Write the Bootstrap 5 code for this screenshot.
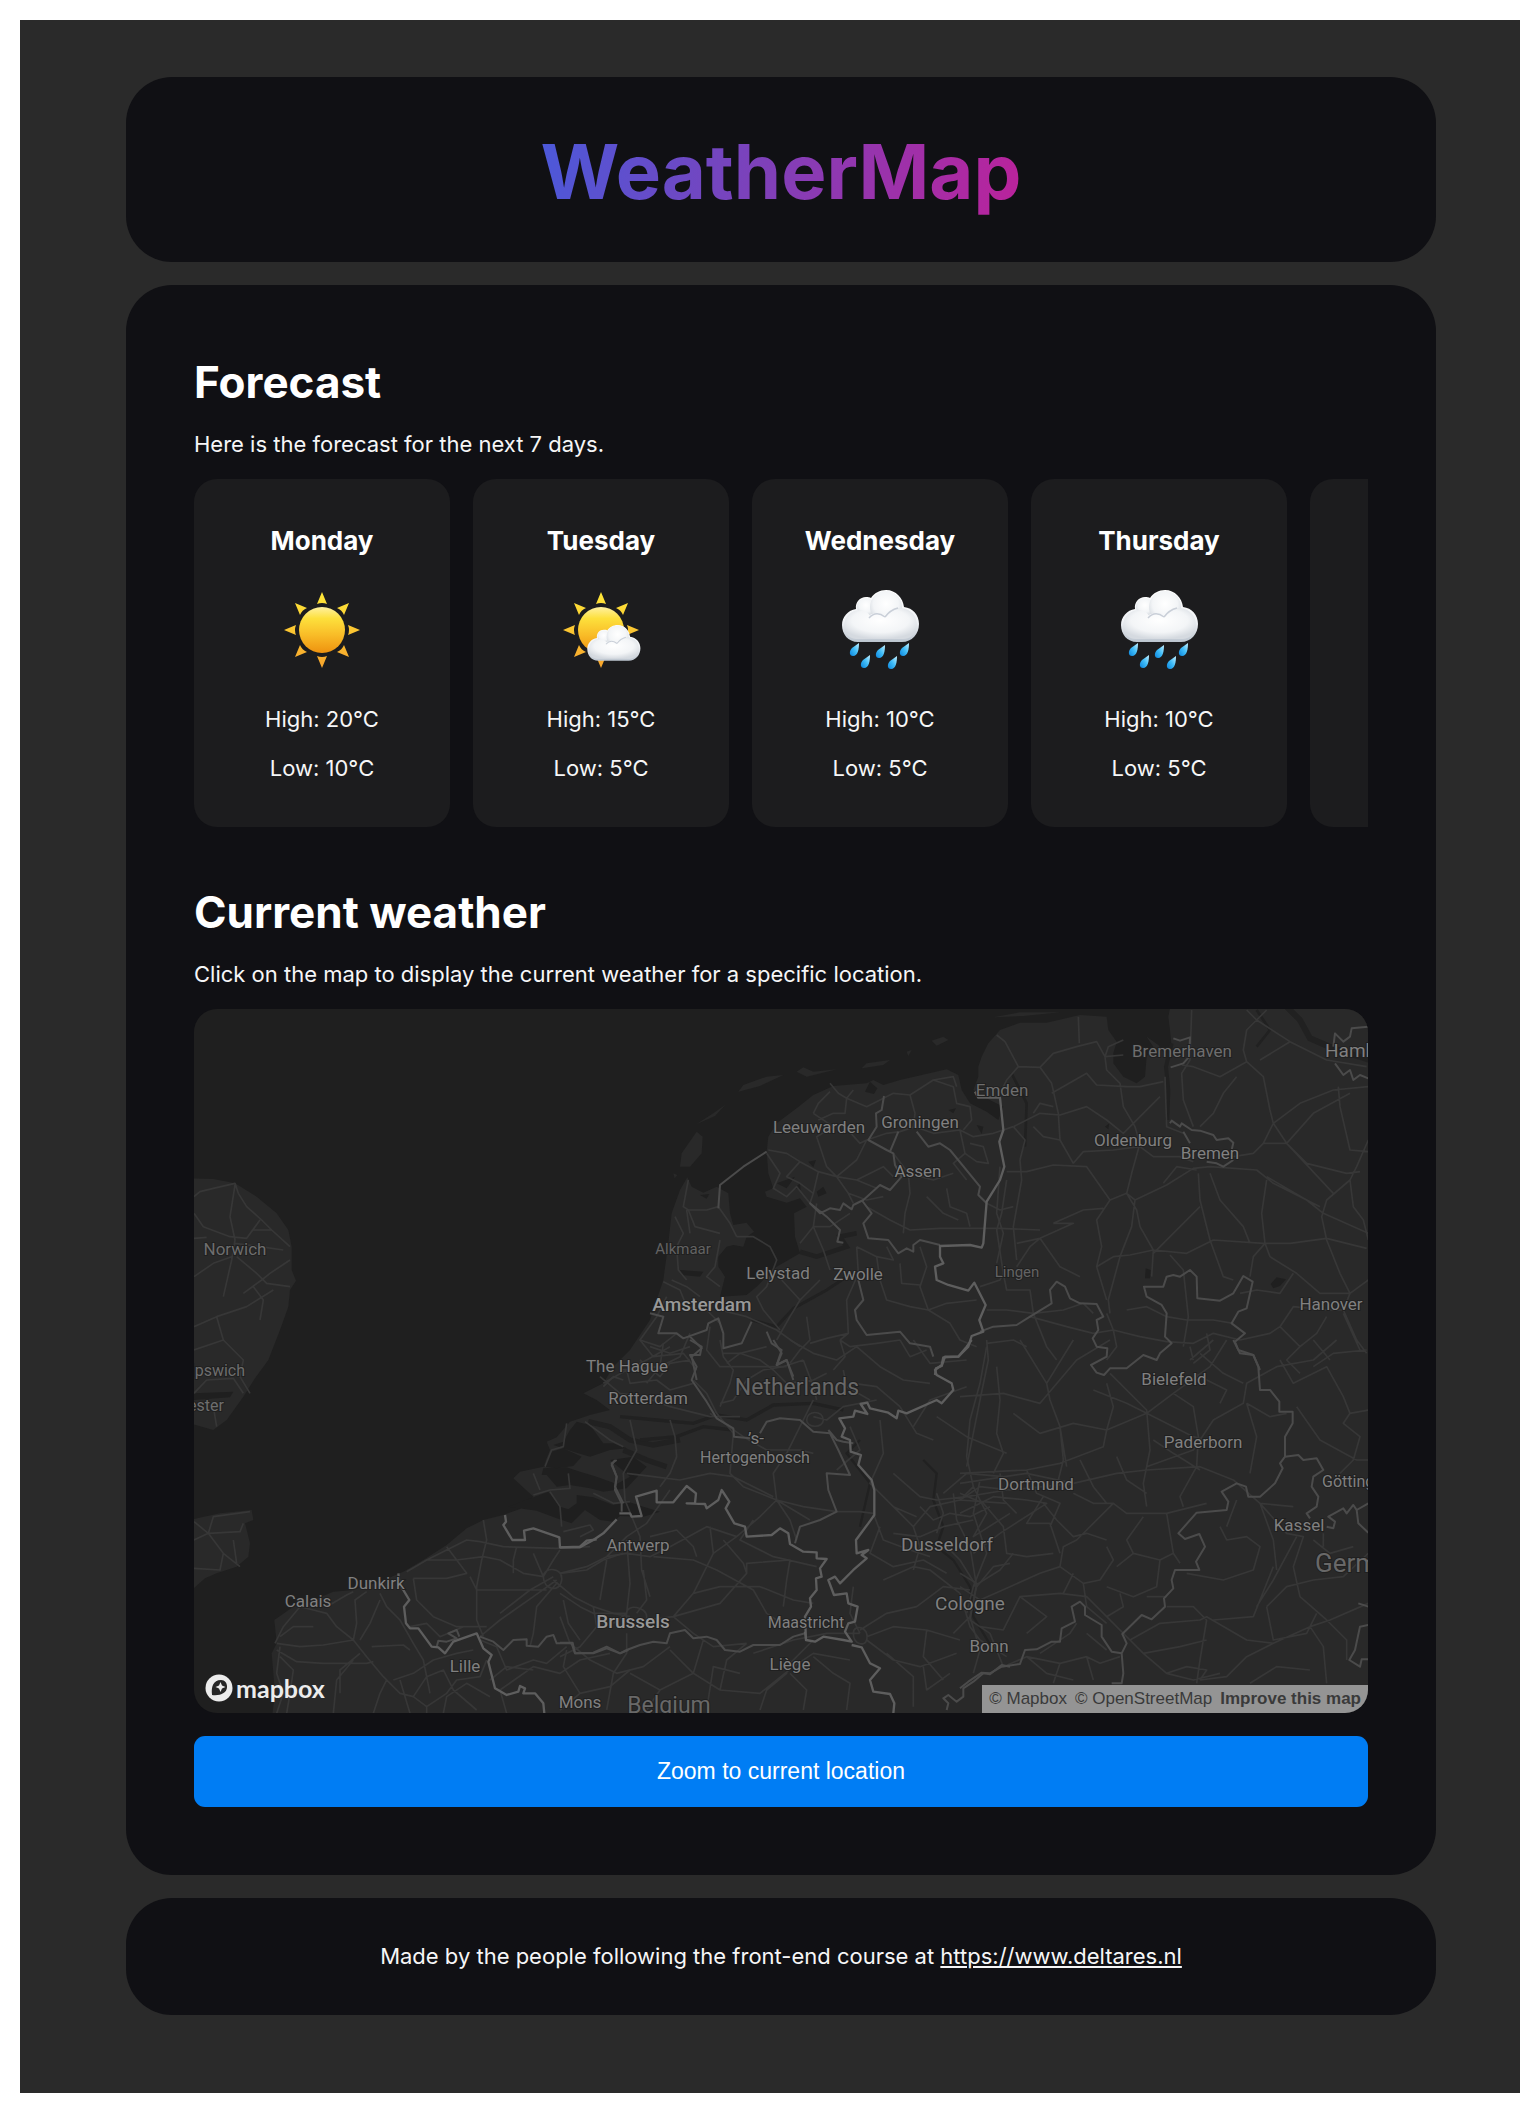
<!DOCTYPE html>
<html lang="en">
<head>
<meta charset="utf-8">
<meta name="viewport" content="width=device-width, initial-scale=1">
<title>WeatherMap</title>
<link href="https://cdn.jsdelivr.net/npm/bootstrap@5.3.0/dist/css/bootstrap.min.css" rel="stylesheet">
<style>
body{background:#fff;padding:20px 20px 19px;font-family:Inter,"Open Sans",sans-serif;font-size:22px;line-height:27px;color:#f6f6f7}
.page-shell{background:#2a2a2a;padding:57px 84px 78px 106px;gap:23px}
.panel{background:#101014;border-radius:46px}
.panel-head{padding:47px 68px 43px}
.panel-main{padding:68px}
.panel-foot{padding:45px 68px}
.site-title{font-size:76px;line-height:95px;font-weight:700;margin:0;background:linear-gradient(100deg,#4b59da,#7d41ba 45%,#bb229b);-webkit-background-clip:text;background-clip:text;color:transparent}
h2{font-size:44px;line-height:58px;font-weight:700;margin:0 0 20px;color:#fff}
.intro{margin:0 0 21px}
.days{gap:23px;overflow-x:auto;scrollbar-width:none;margin-bottom:56px}
.days::-webkit-scrollbar{display:none}
.day{flex:0 0 256px;background:#1c1c1e;border-radius:23px;padding:46px 16px 45px}
.day h3{font-size:26px;line-height:32px;font-weight:700;margin:0 0 33px;color:#fff}
.day svg{width:80px;height:80px;margin-bottom:36px}
.day p{margin:0 0 22px}
.day p:last-child{margin:0}
.map-view{height:704px;border-radius:23px;background:#1f1f1f;margin-bottom:23px}
.map-view>svg{width:100%;height:100%;display:block}
.land{fill:#292929}
.sea{fill:#1f1f1f}
.river{fill:none;stroke:#212121}
.roads{fill:none;stroke:#373737;stroke-width:5;stroke-linejoin:round}
.province{fill:none;stroke:#4b4b4b;stroke-width:6;stroke-linejoin:round}
.nation{fill:none;stroke:#5e5e5e;stroke-width:7;stroke-linejoin:round}
.places{font-family:Roboto,"Noto Sans",sans-serif;font-size:17px;fill:#808080;stroke:#202020;stroke-width:2px;paint-order:stroke;text-anchor:middle}
.places .minor{font-size:15px;fill:#636363}
.places .dim{fill:#6e6e6e}
.places .edge{font-size:16px}
.places .big{font-size:19px}
.places .capital{font-size:19px;font-weight:500;fill:#989898}
.places .country{font-size:23px;fill:#686868}
.places .nation-name{font-size:26px}
.places .from{text-anchor:start}
.places .to{text-anchor:end}
.map-brand{left:11px;bottom:11px;gap:3px;color:#ececec;font:700 25px/28px Lato,sans-serif}
.map-brand:hover{color:#fff}
.map-credit{right:0;bottom:0;height:28px;padding:0 7px;gap:8px;background:#949494;font:17px/28px "Liberation Sans",Arial,sans-serif}
.map-credit a{color:#3a3a3a;text-decoration:none}
.btn-zoom{background:#007df4;color:#fff;font:23px/27px "Liberation Sans",Arial,sans-serif;padding:22px;border:0;border-radius:11px}
.btn-zoom:hover{background:#0a6fd6;color:#fff}
.panel-foot a{color:inherit}
</style>
</head>
<body>
<svg width="0" height="0" class="position-absolute" aria-hidden="true">
<defs>
<linearGradient id="disc" x1="0" y1="0" x2="0" y2="1"><stop offset="0" stop-color="#fff1a0"/><stop offset=".25" stop-color="#fde03c"/><stop offset=".6" stop-color="#f9bd28"/><stop offset="1" stop-color="#ee920f"/></linearGradient>
<linearGradient id="ray" gradientUnits="userSpaceOnUse" x1="0" y1="-38" x2="0" y2="38"><stop offset="0" stop-color="#ffe838"/><stop offset="1" stop-color="#f7a42c"/></linearGradient>
<linearGradient id="puff" x1="0" y1="0" x2="0" y2="1"><stop offset="0" stop-color="#fff"/><stop offset=".6" stop-color="#f1f3f6"/><stop offset="1" stop-color="#bcc5cf"/></linearGradient>
<radialGradient id="ball" cx=".5" cy=".4" r=".6"><stop offset="0" stop-color="#fff"/><stop offset=".65" stop-color="#f3f5f7"/><stop offset="1" stop-color="#d5dae0"/></radialGradient>
<linearGradient id="drip" x1="1" y1="0" x2="0" y2="1"><stop offset="0" stop-color="#c8f1ff"/><stop offset=".5" stop-color="#3fbcf8"/><stop offset="1" stop-color="#0a84dc"/></linearGradient>
<g id="sunshape">
<g fill="url(#ray)"><path d="M0-38L5-26Q0-28-5-26Z"/><path d="M0 38L5 26Q0 28-5 26Z"/><path d="M-38 0L-26-5Q-28 0-26 5Z"/><path d="M38 0L26-5Q28 0 26 5Z"/><path d="M-27-27L-15-22Q-20-20-22-15Z"/><path d="M27-27L15-22Q20-20 22-15Z"/><path d="M-27 27L-15 22Q-20 20-22 15Z"/><path d="M27 27L15 22Q20 20 22 15Z"/></g>
<circle r="23" fill="url(#disc)"/>
</g>
<g id="cloudshape">
<path d="M-22 12C-32 12-38 4-38-5C-38-13-32-20-24-21C-25-28-20-33-14-33C-12-33-10-33-9-32C-6-37 0-40 6-40C16-40 23-32 24-23C33-22 39-15 39-6C39 4 32 12 22 12Z" fill="url(#puff)"/>
<circle cx="-14" cy="-23" r="9" fill="url(#ball)"/><circle cx="6" cy="-23" r="16" fill="url(#ball)"/>
<path d="M-36-4C-36-14-28-20-20-20C-16-20-12-18-10-14C-6-18 0-18 4-14C8-20 14-22 21-22C31-21 37-14 37-5C37 2 32 8 24 9L-24 9C-32 8-36 2-36-4Z" fill="url(#ball)"/>
<path d="M-11-12Q-4-20 5-13M5-13Q10-20 18-22" fill="none" stroke="#c9cfd8" stroke-width="1.5"/>
</g>
<path id="dropshape" d="M5-7C5-1 4 6-1 6C-5 6-5 1-2-2Z" fill="url(#drip)"/>
<g id="rainshape"><use href="#cloudshape"/><use href="#dropshape" x="-26" y="20"/><use href="#dropshape" x="0" y="22"/><use href="#dropshape" x="24" y="20"/><use href="#dropshape" x="-15" y="32"/><use href="#dropshape" x="12" y="33"/></g>
</defs>
</svg>

<div class="page-shell d-flex flex-column">
<header class="panel panel-head d-flex justify-content-center">
<h1 class="site-title">WeatherMap</h1>
</header>

<main class="panel panel-main">
<section>
<h2>Forecast</h2>
<p class="intro">Here is the forecast for the next 7 days.</p>
<div class="days d-flex text-center">
<article class="day"><h3>Monday</h3><svg viewBox="-40 -40 80 80" role="img" aria-label="Sunny"><use href="#sunshape"/></svg><p>High: 20°C</p><p>Low: 10°C</p></article>
<article class="day"><h3>Tuesday</h3><svg viewBox="-40 -40 80 80" role="img" aria-label="Partly cloudy"><use href="#sunshape"/><use href="#cloudshape" transform="translate(12.500 22.500) scale(.69)"/></svg><p>High: 15°C</p><p>Low: 5°C</p></article>
<article class="day"><h3>Wednesday</h3><svg viewBox="-40 -40 80 80" role="img" aria-label="Rain"><use href="#rainshape"/></svg><p>High: 10°C</p><p>Low: 5°C</p></article>
<article class="day"><h3>Thursday</h3><svg viewBox="-40 -40 80 80" role="img" aria-label="Rain"><use href="#rainshape"/></svg><p>High: 10°C</p><p>Low: 5°C</p></article>
<article class="day"></article>
</div>
</section>

<section>
<h2>Current weather</h2>
<p class="intro">Click on the map to display the current weather for a specific location.</p>
<div class="map-view position-relative overflow-hidden">
<svg viewBox="0 0 1174 704" preserveAspectRatio="xMidYMid slice" role="img" aria-label="Map of the Netherlands and its neighbours">
<g transform="scale(.33333)">
<!-- coastline of the continent and the Wadden islands -->
<g transform="translate(1218 -87)">
<path class="land" d="M-985 2220L-975 2140L-985 2020L-970 1990L-977 1920L-920 1880L-860 1860L-800 1835L-740 1830L-660 1805L-590 1775L-530 1740L-460 1695L-400 1645L-350 1620L-290 1605L-240 1587L-200 1550L-260 1495L-240 1475L-170 1460L-150 1410L-160 1385L-130 1372L-90 1325L-30 1305L30 1290L-10 1260L-50 1240L10 1210L40 1160L90 1110L150 1020L190 900L205 790L215 700L240 630L262 592L275 620L310 638L350 620L385 640L390 700L400 735L440 728L462 755L440 770L430 800L400 795L380 800L355 830L355 860L375 890L360 950L440 945L470 920L530 860L600 820L585 770L582 700L620 680L600 655L560 668L500 650L495 635L520 625L505 580L500 515L505 470L530 430L590 385L640 345L700 318L800 310L820 300L850 315L900 300L1040 268L1075 285L1085 330L1110 370L1160 395L1195 420L1210 380L1150 350L1120 330L1135 290L1135 260L1145 230L1165 190L1200 150L1260 128L1340 128L1440 105L1520 110L1525 150L1550 185L1540 220L1540 250L1570 290L1610 310L1635 290L1640 230L1660 200L1640 170L1675 195L1700 230L1715 200L1710 150L1705 110L1715 60H2400V2220Z"/>
<path class="land" d="M240 560L245 520L290 455L308 470L305 520L270 560ZM290 432L340 400L375 375L345 408ZM415 335L430 315L500 290L550 285L480 318ZM590 275L610 262L640 275L710 268L620 290ZM785 265L800 250L870 240L850 255ZM995 182L1030 170L1045 180L1010 197ZM920 215L935 210L925 228ZM220 580L232 585L224 595ZM1180 112L1260 97L1380 97L1270 108Z"/>
<path class="sea" d="M795 335L810 305L832 325L822 342ZM625 545L648 540L640 562ZM530 610L585 590L560 625ZM650 635L670 620L680 640L655 650ZM585 625L600 608L602 630ZM240 870L310 875L300 890L245 885ZM300 645L328 642L320 656ZM1130 435L1150 440L1145 462ZM1045 390L1068 385L1060 400Z"/>
<path class="river" stroke-width="14" d="M600 815L650 830L740 800L720 770L770 760"/>
<path class="river" stroke-width="9" d="M455 1020L530 1040L580 985L680 930L740 890"/>
</g>
<!-- England -->
<path class="land" transform="translate(-42 -447)" d="M30 955L100 957L165 970L230 1010L290 1060L325 1110L335 1160L335 1230L348 1262L330 1290L325 1340L300 1410L265 1500L225 1555L190 1610L140 1680L100 1710L30 1690ZM30 1980L120 1960L215 1950L220 1980L195 1990L210 2050L205 2090L170 2120L110 2140L75 2155L30 2195Z"/>
<!-- German lakes and rivers -->
<g transform="translate(2358 -87)">
<path class="sea" d="M497 865L512 870L510 895L495 895ZM872 912L890 892L918 898L900 918L880 925ZM375 440L388 430L385 448Z"/>
<path class="river" stroke-width="18" d="M920 80L960 120L990 175L1060 205L1170 240"/>
<path class="river" stroke-width="12" d="M575 190L558 260L565 330L562 420"/>
<path class="river" stroke-width="8" d="M95 280L140 370L135 500M830 90L870 150L830 200"/>
</g>
<!-- Zeeland delta -->
<g transform="translate(-42 1053)">
<path class="sea" d="M985 440L1060 412L1105 395L1140 440L1165 448L1190 430L1190 405L1240 412L1300 435L1345 425L1390 440L1440 455L1390 470L1320 468L1300 485L1260 480L1215 450L1175 490L1130 475L1070 452Z"/>
<path class="sea" d="M1090 325L1160 322L1200 335L1250 350L1310 372L1350 350L1320 325L1290 300L1360 290L1400 320L1340 385L1270 395L1230 385L1170 375L1130 380L1100 345L1085 345Z"/>
<path class="sea" d="M1120 255L1180 275L1230 290L1290 270L1340 265L1300 250L1270 250L1230 195L1190 185L1170 210L1150 245ZM1090 320L1115 275L1150 265L1205 290L1180 318L1130 325Z"/>
<path class="river" stroke-width="16" d="M1225 185L1290 200L1350 240L1420 255L1500 240M1330 270L1400 300L1460 320"/>
<path class="sea" d="M42 100L160 95L150 112L42 120Z"/>
</g>
<g transform="translate(1098 993)">
<path class="river" stroke-width="10" d="M180 230L290 240L400 250L470 225L560 240L640 195L760 190L850 210M240 300L350 290L430 260L520 270"/>
<path class="river" stroke-width="7" d="M900 300L860 340L930 430L900 560M1090 360L1130 400L1120 480L1150 560L1130 620L1180 660L1230 740L1240 830L1300 930"/>
</g>

<!-- roads -->
<g class="roads">
<g transform="translate(1218 -87)">
<path d="M690 310L715 340L740 355L760 330M640 400L655 370L690 335M640 400L700 440L650 470L680 560L710 590L745 640L760 670M740 355L735 400L700 400L655 420M740 355L800 380L880 340L930 345L1000 300L1060 290L1070 320M930 345L945 400L940 440M505 510L560 520L600 545L655 575L710 590L770 600L830 625M500 520L540 580L520 625L560 650L590 620L630 670M655 575L640 640L630 670M600 545L560 590L600 610L640 640M710 590L770 540L800 480L780 490L735 440M800 480L860 460L900 455L945 440M945 440L1000 460L1080 450L1120 470L1180 460L1240 440M1080 450L1095 520L1060 550L1100 600M1000 300L1060 320L1070 370L1110 380L1115 420L1090 450M1110 490L1150 500L1165 550L1130 545L1095 520M880 520L925 580L930 640L915 700L910 760M925 580L1000 600L1060 580M770 600L850 560L880 590M745 640L800 660L850 650M800 680L870 720L930 750L1020 745L1100 745L1200 745L1320 750M1040 625L1050 680L1100 700L1110 740M980 650L1030 700L1075 720M1200 560L1190 700L1210 760L1190 850M1160 670L1200 690L1240 680M650 670L640 740L600 790M640 740L690 740L750 700M640 740L670 810L690 870M770 800L830 830L880 840L860 800M830 830L840 900L860 960L930 980L985 990L1040 970L1130 960M985 990L960 920L980 860L960 800M985 990L1050 1030L1080 1080L1130 1100M900 850L905 910L960 915M770 800L775 880L740 960L745 1060L720 1080M545 900L600 960L570 1010L530 1080M600 960L660 900M620 1010L630 1080L600 1110L570 1150M745 1060L680 1075L630 1090M720 1080L750 1100L830 1090L900 1080M720 1080L735 1130L700 1170M900 1080L930 1130L980 1110M355 680L320 690L265 690L250 680L265 600M355 680L390 730L410 770M265 690L285 740L360 760M225 710L250 760L230 800L235 870L260 900M360 780L345 860L320 890L360 920M260 690L270 760M410 770L460 770L510 800L530 840L500 920L470 950L490 990L540 1050M190 905L240 930L260 980L320 990L360 1030M215 900L260 920L300 950M200 950L170 1010L120 1080L180 1100L230 1060M150 1100L210 1120L270 1100M360 990L440 1010L530 1050L600 1100M380 1150L420 1120L500 1100M330 1040L320 1110L360 1160L440 1160L560 1160M270 1060L240 1130L180 1160L60 1170"/>
</g>
<g transform="translate(2358 -87)">
<path d="M50 165L75 185L115 260L180 262L215 310L235 400L240 480L280 550M115 260L80 300L60 340M180 262L220 220L290 200L350 185L375 230L430 225M295 110L298 190M375 230L385 200L430 180M375 230L380 270L420 310L430 380L465 440L480 490L455 580L440 640L465 660M215 340L320 280L350 315L440 320L480 320L550 305M160 400L180 370L220 380M100 440L180 400L240 405L320 380L380 420L430 460L540 350M160 440L190 470L240 480M120 540L135 480L100 440M120 540L125 600L100 740L110 840M280 550L310 515L400 510L480 500L520 530L600 530L640 545M80 575L140 575L220 555L320 560L390 660L440 640L470 690L480 740L520 810L515 890M465 660L560 615L640 565L690 560L830 570L880 610L980 660L1030 700L1165 760M465 660L455 740L420 830L385 960L390 1000M390 660L350 720L365 800L350 860L380 960M220 730L310 690L370 685M110 790L180 775L280 730L220 730M180 775L240 860L300 890M110 860L150 800L180 775M520 810L620 820L700 780L850 790L930 790L1040 775L1160 805M520 820L600 740L660 680M350 860L400 830L450 825L520 810M570 825L610 870L625 1010L610 1100M635 90L630 240L605 280L610 360L640 440M555 290L560 440L610 460M605 255L640 260L720 290L800 245L850 290L870 390L880 430M800 245L790 210L800 150L830 120L860 90M830 120L930 185L1040 240L1160 260M840 240L930 185M800 90L830 120M880 430L920 490L980 550L1100 580L1140 575M660 440L700 400L730 340L770 290M880 430L960 370L1060 330L1165 320M820 520L850 490L880 430M850 490L920 490L1000 400L1110 340M760 530L820 520M1075 320L1080 380L1110 510L1165 515M1165 480L1130 560L1110 600L1040 660L1025 710L1040 780L1080 880L1110 940M690 580L720 660L790 740L810 790M655 580L660 660L690 780L730 890L760 900M855 790L845 700L860 600M855 790L870 830L950 880L1020 940L1110 940L1165 900M855 790L820 830L810 890M940 880L900 940L830 930L780 940M1110 600L1120 680L1150 720L1165 780M550 610L590 560L650 570M860 590L980 660L1020 680M920 490L1060 640M160 1000L150 930L80 930L70 880L50 750L65 700L80 600M0 920L60 900L70 880M20 990L80 990L160 1000L250 990L310 970L340 1000M160 1000L200 1100L230 1140M20 1090L100 1080L140 1100M150 1010L260 1040L340 1060L400 1050L480 1070L560 1085L640 1090L700 1060L780 1080M400 1050L410 1100L380 1140M400 1050L380 1000M440 990L500 980L560 1010L620 1020L700 1020L760 1030M640 1150L690 1110L680 1060M780 1080L870 1060L900 1040L940 980L1040 990L1090 990L1110 940M900 1040L960 1100L920 1140L960 1180M960 1100L1010 1060L1040 1010M1090 990L1130 1080L1160 1120M1090 1000L1140 1110M1000 1160L1060 1120L1160 1110"/>
</g>
<g transform="translate(-42 -447)">
<path d="M42 1010L60 995L100 985L165 970L175 1000L200 1040L245 1080L275 1110L330 1160M165 975L150 1070L165 1140L155 1200L130 1310M42 1060L70 1100L150 1130L200 1135L240 1080M42 1135L80 1132M215 1110L275 1110M165 1150L240 1160L310 1170M170 1190L230 1240L260 1270L330 1280M330 1200L270 1240L245 1260L190 1300M42 1250L100 1210L155 1190M220 1280L250 1320L240 1380M42 1400L110 1370L200 1340L280 1290M110 1370L130 1440L190 1500L180 1550L210 1600M42 1600L80 1560L160 1555L190 1600M100 1640L110 1700M42 1470L130 1440M42 1985L85 2020L130 2080L180 2120M85 2020L100 1970L210 1955M85 2020L180 2015L190 1990M160 2040L170 2110M42 2125L120 2130L130 2080M42 2040L85 2020"/>
</g>
<g transform="translate(-42 1053)">
<path d="M285 850L310 800L360 740L400 750L440 760L470 800L520 840L560 890L610 950L660 1000L700 1010L740 1040L740 1060M290 850L360 860L430 855L520 840L530 790L525 720L560 695M290 870L350 905L430 910L560 910L580 905M300 860L290 940L310 1000L290 1060M300 890L340 930L330 1000L320 1060M300 830L340 800L400 800M440 740L500 705L520 695M600 700L620 740L660 780L700 850L730 900L750 1000M600 720L570 790L540 840M480 1000L480 930L540 880M575 860L670 855L690 870M520 900L470 960L460 1060M620 960L600 1000L580 1060M640 960L700 940L760 900L830 880L880 870M700 1010L740 950L790 930L820 990L890 1050M740 1040L800 1000L830 960L900 950L920 900M700 655L710 720L760 770L830 800L920 800M680 635L740 600L860 540L900 545L970 560L1130 565L1230 560M740 600L830 600L910 590L960 600L1030 640L1090 650M910 480L920 540L905 600L890 680L890 780L910 830M870 650L890 690L960 690L1100 690M800 560L860 640L800 655L700 655M1000 640L1000 600L1010 560M1060 580L1090 650L1120 600L1140 570M1130 660L1060 710L960 780L900 830M1120 650L1050 690L960 760M1090 650C1090 620 1150 620 1145 660C1140 700 1090 690 1090 650M1120 660L1180 710L1240 740L1300 760L1350 770M1140 640L1220 630L1270 600L1330 580M1130 670L1070 740L1060 820L1050 860M1150 720L1165 790L1200 840M900 840L950 860L980 930L1060 900L1100 910L1160 860M1160 870L1150 920L1200 1000L1290 980L1350 930M1060 930L980 920L930 960M980 1060L960 990L1060 920L1140 940L1200 900L1290 880M1200 1000L1140 1050M1215 185L1290 240L1330 260M1160 190L1150 260L1115 270L1095 320M1110 395L1140 440L1145 500M1165 340L1170 385L1110 390L1060 405M1240 400L1300 430L1350 425M1150 515L1230 495L1240 510L1200 530M1270 80L1300 50L1330 60M1280 600L1270 660L1260 720M1060 340L1080 390M850 800L780 830L740 790L690 800M660 960L690 1060M790 1060L800 1010L860 970L930 1010"/>
</g>
<g transform="translate(1098 993)">
<path d="M120 110L180 160L250 170L330 200L450 230L540 230M130 130L200 90L260 60L330 20M200 90L210 130L290 120L330 150L400 130M240 60L300 110L330 70L390 60M310 10L300 80L260 130M240 0L280 50L370 40L410 90M330 240L345 290L350 350L330 400L300 440M210 240L230 330L190 400L195 480L240 590L245 690L270 770M400 120L440 160L470 220L520 280L510 400L550 440L650 480L750 540M480 190L520 180L560 120L610 90L670 80L730 60M490 40L540 40L600 60L640 90L680 130L760 120L800 100M480 0L490 50L520 90L510 130L480 200M450 220L550 290L620 330L720 330L760 340M200 400L280 410L360 420L450 400L520 410L640 470M650 480L640 400L680 340L760 180M650 480L730 500L830 515L900 515L940 520M650 480L600 530L530 590L460 640L400 760M650 480L690 540L710 600M690 0L760 40L830 60L890 20L960 80L1030 120L1110 130M730 60L760 140L770 180M880 130L950 140L1020 200M760 230L800 240L850 200L950 180M740 240C740 210 790 210 790 240C790 265 740 265 740 240M850 90L860 140L930 180M830 390L900 330L870 260M960 240L970 340L930 430L1000 500L1070 530M1060 0L1110 70L1220 60M1280 20L1260 130L1230 240L1220 350L1240 440L1200 480M1020 200L1070 280L1120 300M1220 140L1110 180L1060 260M1130 230L1220 290L1340 340M1000 400L1080 470L1130 480L1220 470L1340 450M1060 560L1110 500L1200 480L1340 490M1080 500L1120 540L1170 520L1230 530L1290 500M1130 460L1150 520L1130 580M1180 460L1190 540L1230 620L1250 740L1230 830L1180 880M1150 460L1220 400L1330 410M1240 440L1280 520L1240 590L1350 520M1000 580L1080 590L1150 560L1240 540M960 560L930 640L1000 680L1090 660L1160 700M940 520L970 600L1050 630L1110 650M970 720L1060 680L1110 690L1200 760M900 870L980 820L1070 800L1150 740L1230 750M1000 500L1060 560L1080 620L1060 690M920 890L1000 860L1100 870L1200 900M1200 760L1230 860L1260 900L1340 950M1160 620L1200 660L1250 740L1300 680L1350 670M0 700L80 680L140 650L200 590L260 550L330 450M140 650L200 640L270 650L330 620L440 560L530 590M200 600L210 730L200 820L160 850M250 690L260 780L230 820M200 820C200 790 260 800 260 830C260 880 190 870 200 820M0 760L60 800L100 820L200 820M260 840L340 830L400 760L480 740L600 740L700 780L760 790M340 830L480 790L560 700L550 670L490 600M340 830L400 880L460 920L560 910M280 650L400 660L470 690L580 750L620 820L650 840M560 700L560 670L690 660L680 720L670 800M450 560L460 640M410 650L400 620L350 570L270 590M580 540L540 600L640 650L770 680M0 830L30 910L90 960L170 1000L250 980L330 920M100 800L110 860L60 920L0 950M200 880L200 940L160 1000L140 1110M210 1000L300 1050L400 1000L430 900M330 930L400 1000L480 1050L600 1060L700 980L760 940L870 960M300 1050L260 1110M480 1050L500 960L560 910M540 1000L460 980L440 1110M690 960L680 1000L620 1050L600 1110M690 1000L740 1050L730 1110M760 950L820 1000L870 1030L860 1110M690 970L760 900M580 940L640 920L700 900L800 880L900 880M900 880L870 820L880 740M880 880C880 850 930 860 920 900C915 920 880 915 880 880M920 900L1000 960L1080 980L1190 940M980 940L1060 1010L1060 1100M1090 980L1100 1050L1170 1000M1230 830L1260 930L1240 1000M1100 870L1090 950L1150 1020"/>
</g>
<g transform="translate(2298 993)">
<path d="M80 0L85 60L60 180L40 280L20 380M0 170L130 160L240 190L350 60L450 0M180 0L260 130L270 180L300 260L320 380M340 0L260 130M110 80L120 180L110 280L130 340L100 400M160 220L240 280L340 250L440 270L560 220L640 160L750 80L800 0M440 270L430 320L300 370L200 390L0 400M440 130L460 200L440 270M450 100L560 210L570 330L550 430L560 500M400 150L500 190L560 220L700 290L770 310M640 160L700 200L715 290L710 380L660 470L670 500M0 430L200 400L340 430L470 400L560 390L720 380L820 420L900 490L1000 500M720 390L640 340L580 300M560 380L700 330L760 240L850 190L860 130L950 80L1060 60L1130 0M860 190L890 290L870 400M860 190L930 230L980 220M780 190L800 150L700 100M690 60L760 0M700 60L690 20M720 40L790 100L850 130M960 60L1000 130L1100 80L1150 170L1170 220L1225 210M1060 0L1110 60M1010 200L1080 300L1190 360L1225 360M1170 220L1150 250L1200 290L1180 360L1140 400M0 480L60 440L150 450L250 440L340 430M0 520L100 470L200 480L260 490L120 580L40 640M60 420L40 520L80 640L40 740L20 820M250 470L200 550L270 550L300 640M250 490L290 540L340 590L380 580L440 600M340 460L400 490L460 490L500 520L620 520L740 490M460 490L380 570L350 600L310 620L300 680L370 730L420 720L460 660L440 620M360 360L400 440L440 490M470 350L500 420L560 460M620 520L640 640L660 670M550 530L500 600L520 640L470 680M520 640L600 660L640 640M600 660L590 740L520 770L440 740M120 400L130 480L170 520M200 390L230 460L300 490L270 560M300 260L310 360L290 440M0 460L70 490L130 560L140 640L200 650L280 640M160 640L120 690L40 740M0 740L60 780L150 740L240 700L300 680M0 700L50 730L30 840L90 880L130 980M60 860L130 870L180 770L300 760L380 770L440 830L510 900L550 940L620 1000L700 1020L780 1000M370 730L380 800L440 850M180 770L260 830L200 880M310 760L340 700M440 830L490 800L480 760M510 900L600 850L720 840L740 830L860 900L940 910L1050 860L1110 840L1225 790M740 840L720 960L710 1030M740 840L700 800L620 800M620 770L560 770M680 700L790 720L880 690L900 620L860 590L800 600L780 560M830 480L800 560M900 490L980 580L1030 590L1000 680L1020 770L1100 840M940 680L900 780L880 830L760 840M1010 590L940 720L890 800M900 490L940 600L950 690M920 800L980 740L1060 720L1150 710L1225 640M920 800L940 900L1040 880L1070 820M1050 860L1090 920L1100 1030M940 910L860 950L800 1010L720 1020M1060 600L1110 640L1180 620M1090 580L1090 620M550 940L660 920L740 900M380 880L440 930M130 980L200 950L300 970L380 950L420 970L480 950M200 950L260 1000L340 1020M240 940L330 880L350 850M300 970L280 1030M380 950L400 1020M1100 840L1160 900L1160 960M870 1030L950 980L1050 990M620 1000L680 980L740 990L720 1020"/>
</g>
</g>

<!-- province and state lines -->
<g class="province">
<path transform="translate(1218 -87)" d="M355 685L360 615L430 560L500 515M852 348L845 390L828 400L830 440L805 480L860 510L880 520L885 555L905 590L870 630L840 615L790 660L760 675L755 688L730 670L720 690L690 685L660 700L630 670L680 710L720 750L712 785L730 788M895 455L870 515M950 455L985 500L1020 490L1050 510L1140 620L1135 645L1160 670M785 660L815 700L790 730L805 775L865 780L895 820L920 805L940 815L940 795L960 780L1020 795M775 900L790 960L765 990L770 1020L800 1065L900 1055L930 1090L990 1100L1000 1130M150 1000L190 1010L175 1060L230 1060L250 1075L320 1050L325 1030L355 1015L370 1060L370 1105L425 1090L455 1025M270 1070L305 1105L275 1130L290 1200M500 1055L515 1090L545 1110L530 1155L560 1140L580 1200"/>
<path transform="translate(2358 -87)" d="M580 175L600 182L630 172L628 230L610 250L572 262M570 430L575 422L600 440L605 430L635 450L660 452L700 465L710 480L745 475L760 488L755 510M610 455L630 490M680 545L710 550L730 560L760 540M1165 140L1115 145L1110 170L1090 185L1065 160L1060 200M1065 250L1090 285L1110 270L1120 300L1140 285L1165 295M0 1055L40 1040L110 1035L150 1010L215 970L210 930L230 905L255 920L270 955L300 970L350 972L370 1010L350 1020L355 1050L338 1075L350 1100L382 1105L380 1130L333 1155L350 1178L372 1185L390 1165L440 1165L490 1125L530 1140L540 1120L575 1090L555 1070L560 1000L545 975L500 950L492 920L550 920L560 890L580 885L600 890L630 870L650 890L652 955L720 962L760 940L790 888L818 905L800 985L775 995L755 1030L795 1060L765 1085L775 1110L820 1125L840 1170"/>
<path transform="translate(-42 1053)" d="M1310 300L1295 310L1310 350L1305 390L1325 430L1325 455M770 860L775 842L800 845L830 835L805 820L830 810L838 830M900 830L940 845L970 870L1000 840L1040 838L1040 857L1075 860L1100 830L1120 825L1130 850L1175 850L1185 880L1240 878L1280 860L1320 880L1345 870"/>
<path transform="translate(1098 993)" d="M390 0L425 20L420 45L390 45L410 80L395 120L440 185L470 235L520 265L522 290L570 295M600 280L620 245L660 235L720 240L760 275L810 280L835 330L870 405L800 400L805 450L830 515L780 540L720 560L705 610M805 270L830 300L850 305L880 310M640 0L665 40L650 75L680 60L700 110M165 360L155 375L170 410L165 440L190 490M0 908L38 908L45 940L100 940L140 925L180 940L200 930L240 915L280 905L320 910L330 880L375 870L400 895L440 890L470 900L495 930L540 935L580 915L660 915L700 890L735 880M1160 1110L1165 1090L1150 1075L1165 1065L1190 1085L1210 1070L1210 1045L1240 1025L1270 1000L1290 1003L1325 975L1350 980"/>
<path transform="translate(2298 993)" d="M820 0L840 40L880 45L895 80L900 150L930 150L958 185L958 215L998 215L998 250L975 290L975 350L1015 345L1030 360L1070 355L1090 390L1060 410L1055 440L1075 470L1070 500L1040 520L1050 535M975 350L960 370L968 385L945 430L900 470L865 470L858 440L830 430L785 455L805 485L800 510L710 518L655 580L675 597L718 582L735 620L708 665L718 690L645 690L635 720L640 745L612 775L615 800L575 838L545 825L487 882L500 910L485 940L490 1000L485 1030L455 1030M0 1045L25 1025L65 998L90 1000L125 980L180 972L195 930L230 928L275 905L300 905L305 865L345 845L335 800L360 785L375 800L375 825L425 855L425 890L455 935L485 940M1100 560L1120 565L1125 545L1105 530L1150 505L1160 520L1180 495L1190 510L1225 490M1190 510L1195 550L1225 578M1225 855L1200 860L1185 930L1168 960L1200 980L1205 958L1225 958M1195 790L1225 800"/>
</g>

<!-- national borders -->
<g class="nation">
<path transform="translate(1218 -87)" d="M1125 335L1135 353L1200 353L1210 450L1198 485L1213 560L1200 600L1160 665L1150 790L1145 803L1110 795L1020 798L1020 830L1030 850L1005 860L1010 900L1045 915L1105 932L1123 908L1157 975L1138 1020L1150 1055L1115 1068L1105 1100L1075 1130L1035 1130L1025 1158L1008 1165L1005 1185"/>
<path transform="translate(1098 993)" d="M1235 0L1220 20L1195 50L1150 52L1145 75L1125 90L1130 105L1175 130L1180 150L1145 190L1130 180L1040 220L1015 212L1010 235L985 218L930 205L922 188L902 192L922 222L885 212L880 230L838 235L855 265L845 290L870 300L872 335L903 345L895 375L935 420L943 450L943 525L925 550L888 600L890 640L925 630L905 645L920 655L880 690L840 730L825 710L805 720L822 765L860 760L865 790L893 800L885 845L865 850L855 875L875 905L850 900L790 890L765 905L738 900L735 875M875 915L905 922L930 970L960 985L930 1020L940 1055L990 1062L1003 1090L1000 1120M0 622L60 622L100 600L130 580L170 538M178 520L210 520L215 530L245 528L228 470L290 452L290 487L340 487L380 438L408 460L405 490L380 490L435 492L440 505L475 480L485 450L508 485L497 505L523 550L555 560L560 590L635 585L660 565L685 580L690 612L730 635L770 637L770 655L800 657L780 685L785 710L768 715L770 750L750 775L753 800L735 830L738 900"/>
<path transform="translate(-42 1053)" d="M975 465L978 485L970 495L997 540L1035 540L1032 512L1060 505L1138 532L1140 562L1200 560L1220 542L1250 538M655 640L658 670L688 720L672 740L678 790L690 805L715 805L755 860L775 862L795 880L820 845L890 820L910 865L935 885L925 905L945 985L980 1005L1015 995L1020 978L1035 985L1030 1000L1065 1000L1090 1030L1093 1060"/>
</g>
</g>
<g class="places">
<text x="41" y="246" class="dim">Norwich</text><text x="51" y="367" class="dim edge to">Ipswich</text><text x="30" y="402" class="dim edge to">Colchester</text>
<text x="489" y="245" class="minor">Alkmaar</text><text x="625" y="124">Leeuwarden</text><text x="726" y="119">Groningen</text><text x="724" y="168">Assen</text>
<text x="808" y="87" class="dim">Emden</text><text x="988" y="48" class="dim">Bremerhaven</text><text x="1131" y="48" class="big from">Hamburg</text>
<text x="939" y="137">Oldenburg</text><text x="1016" y="150">Bremen</text><text x="584" y="270">Lelystad</text><text x="664" y="271">Zwolle</text>
<text x="823" y="268" class="minor">Lingen</text><text x="1137" y="301">Hanover</text><text x="508" y="302" class="capital">Amsterdam</text>
<text x="433" y="363">The Hague</text><text x="454" y="395">Rotterdam</text><text x="603" y="386" class="country">Netherlands</text>
<text x="562" y="435">’s-</text><text x="561" y="454" class="edge">Hertogenbosch</text><text x="444" y="542">Antwerp</text><text x="439" y="619" class="capital">Brussels</text>
<text x="753" y="542" class="big">Dusseldorf</text><text x="776" y="601" class="big">Cologne</text><text x="795" y="643">Bonn</text><text x="612" y="619" class="edge">Maastricht</text>
<text x="596" y="661">Liège</text><text x="386" y="699">Mons</text><text x="475" y="704" class="country">Belgium</text><text x="271" y="663">Lille</text>
<text x="182" y="580">Dunkirk</text><text x="114" y="598">Calais</text><text x="980" y="376">Bielefeld</text><text x="1009" y="439">Paderborn</text>
<text x="842" y="481">Dortmund</text><text x="1128" y="478" class="edge from">Göttingen</text><text x="1105" y="522">Kassel</text><text x="1121" y="563" class="country nation-name from">Germany</text>
</g>
</svg>
<a class="map-brand position-absolute d-flex align-items-center text-decoration-none" href="#mapbox">
<svg width="28" height="28" viewBox="-14 -14 28 28" aria-hidden="true"><circle r="13.500" fill="#ececec"/><path d="M-7 7C-8-1-6-8 2-8C6-8 8-5 8-1C8 5 1 8-7 7Z" fill="#262626"/><path d="M1.500-6L3-2.500L6.500-1L3 .5L1.500 4L0 .5L-3.500-1L0-2.500Z" fill="#ececec"/></svg>
<span>mapbox</span></a>
<div class="map-credit position-absolute d-flex"><a href="#mapbox">© Mapbox</a><a href="#osm">© OpenStreetMap</a><a class="fw-bold" href="#improve">Improve this map</a></div>
</div>
<button type="button" class="btn btn-zoom d-block w-100">Zoom to current location</button>
</section>
</main>

<footer class="panel panel-foot text-center">Made by the people following the front-end course at <a href="https://www.deltares.nl">https://www.deltares.nl</a></footer>
</div>
<script src="https://cdn.jsdelivr.net/npm/bootstrap@5.3.0/dist/js/bootstrap.bundle.min.js"></script>
</body>
</html>
